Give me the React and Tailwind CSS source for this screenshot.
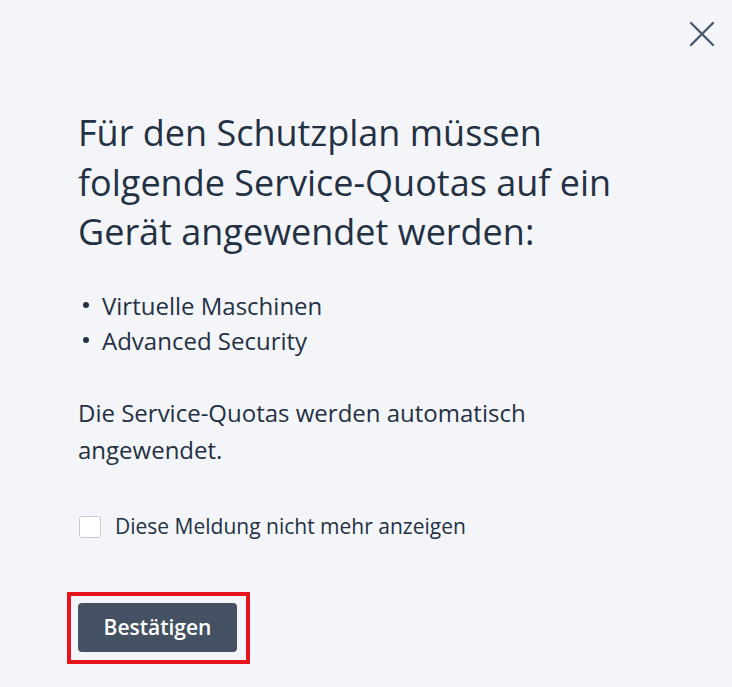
import React from "react";

const App = () => {
  return (
    <div
      className="relative w-[732px] h-[687px] bg-[#f3f5f8] text-[#243143] overflow-hidden"
      style={{ fontFamily: '"Open Sans", "Liberation Sans", sans-serif' }}
    >
      {/* Close */}
      <button className="absolute right-[15px] top-[19px] w-[30px] h-[30px] flex items-center justify-center text-[#4a5a6e]">
        <svg width="26" height="26" viewBox="0 0 26 26" fill="none" stroke="currentColor" strokeWidth="2.4" strokeLinecap="round">
          <path d="M2 2 L24 24 M24 2 L2 24" />
        </svg>
      </button>

      <div className="pl-[78px] pt-[108px] flex flex-col">
        <h1 className="text-[36px] leading-[49.5px] font-normal w-[600px]">
          Für den Schutzplan müssen folgende Service-Quotas auf ein Gerät angewendet werden:
        </h1>

        <ul className="mt-[31px] text-[24px] leading-[35px]">
          <li className="flex items-center">
            <span className="w-[6px] h-[6px] rounded-full bg-[#243143] ml-[5px] mr-[13px]" />
            Virtuelle Maschinen
          </li>
          <li className="flex items-center">
            <span className="w-[6px] h-[6px] rounded-full bg-[#243143] ml-[5px] mr-[13px]" />
            Advanced Security
          </li>
        </ul>

        <p className="mt-[36px] text-[24px] leading-[37px] w-[500px]">
          Die Service-Quotas werden automatisch angewendet.
        </p>

        <label className="mt-[44px] h-[30px] flex items-center gap-[14px] text-[21px]">
          <span className="ml-[1px] w-[22px] h-[22px] rounded-[3px] border border-[#c3cbd6] bg-white" />
          Diese Meldung nicht mehr anzeigen
        </label>

        <div className="mt-[50px] -ml-[11px] w-[183px] h-[72px] border-[4px] border-[#e8141d] flex items-center pl-[7px]">
          <button className="w-[159px] h-[49px] rounded-[4px] bg-[#435162] text-white text-[21px] font-semibold">
            Bestätigen
          </button>
        </div>
      </div>
    </div>
  );
};

export default App;
